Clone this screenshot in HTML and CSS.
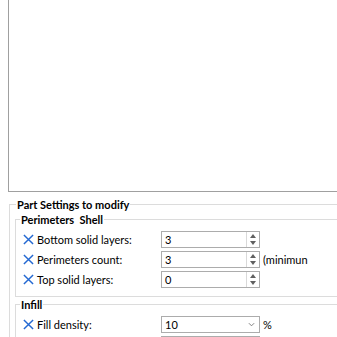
FILE: index.html
```html
<!DOCTYPE html>
<html lang="en">
<head>
  <meta charset="UTF-8">
  <title>Part settings</title>
  <link rel="stylesheet" href="styles.css">
</head>
<body>
<div class="preview"></div>

<fieldset class="group outer">
  <legend>Part Settings to modify</legend>

  <fieldset class="group inner">
    <legend>Perimeters&nbsp; Shell</legend>
    <div class="row">
      <svg class="remove" viewBox="0 0 12 12"><path d="M1 1 L11 11 M11 1 L1 11"/></svg>
      <span class="label">Bottom solid layers:</span>
      <div class="spin"><span class="value">3</span><span class="arrows"><i class="up"></i><i class="down"></i></span></div>
    </div>
    <div class="row">
      <svg class="remove" viewBox="0 0 12 12"><path d="M1 1 L11 11 M11 1 L1 11"/></svg>
      <span class="label">Perimeters count:</span>
      <div class="spin"><span class="value">3</span><span class="arrows"><i class="up"></i><i class="down"></i></span></div>
      <span class="unit">(minimun</span>
    </div>
    <div class="row">
      <svg class="remove" viewBox="0 0 12 12"><path d="M1 1 L11 11 M11 1 L1 11"/></svg>
      <span class="label">Top solid layers:</span>
      <div class="spin"><span class="value">0</span><span class="arrows"><i class="up"></i><i class="down"></i></span></div>
    </div>
  </fieldset>

  <fieldset class="group inner">
    <legend>Infill</legend>
    <div class="row">
      <svg class="remove" viewBox="0 0 12 12"><path d="M1 1 L11 11 M11 1 L1 11"/></svg>
      <span class="label">Fill density:</span>
      <div class="combo"><span class="value">10</span><svg class="chevron" viewBox="0 0 8 5"><path d="M1 1 L4 4 L7 1"/></svg></div>
      <span class="unit">%</span>
    </div>
    <div class="row">
      <span class="icon-gap"></span>
      <span class="label"></span>
      <div class="combo"></div>
    </div>
  </fieldset>
</fieldset>
</body>
</html>
```

FILE: styles.css
```css
* {
  box-sizing: border-box;
}

html, body {
  width: 100%;
  height: 100%;
  overflow: hidden;
  margin: 0;
  padding: 0;
  background: #fff;
  color: #000;
  font: 11px Lato, sans-serif;
}

.preview {
  margin-left: 8px;
  height: 192px;
  border-left: 1px solid #a0a0a0;
  border-bottom: 1px solid #a0a0a0;
  background: #fff;
}

.group {
  margin: 0;
  padding: 0;
  border: 1px solid #dcdcdc;
  border-right: none;
  min-width: 0;
}

.group legend {
  font-weight: bold;
  line-height: 15px;
  padding: 0 1px;
}

.outer {
  margin-top: 5px;
  margin-left: 9px;
  padding-bottom: 20px;
}

.outer > legend {
  margin-left: 6px;
}

.inner {
  margin-left: 5px;
  padding: 2px 0 7px 7px;
}

.inner > legend {
  margin-left: -3px;
}

.row {
  display: flex;
  align-items: center;
  height: 20px;
}

.remove, .icon-gap {
  width: 11px;
  height: 11px;
  fill: none;
  stroke: #2469d2;
  stroke-width: 1.6;
}

.label {
  margin-left: 3px;
  width: 124px;
}

.spin, .combo {
  display: flex;
  align-items: center;
  width: 99px;
  height: 17px;
  border: 1px solid #acacac;
  background: #fff;
}

.value {
  flex: 1;
  padding-left: 3px;
}

.arrows {
  display: flex;
  flex-direction: column;
  justify-content: center;
  align-items: center;
  gap: 3px;
  width: 13px;
  height: 100%;
  border-left: 1px solid #d9d9d9;
}

.arrows i {
  width: 0;
  height: 0;
  border-left: 3.5px solid transparent;
  border-right: 3.5px solid transparent;
}

.arrows .up {
  border-bottom: 4px solid #606060;
}

.arrows .down {
  border-top: 4px solid #606060;
}

.chevron {
  width: 7px;
  height: 5px;
  margin-right: 4px;
  fill: none;
  stroke: #707070;
  stroke-width: 1;
}

.unit {
  margin-left: 3px;
}
```
